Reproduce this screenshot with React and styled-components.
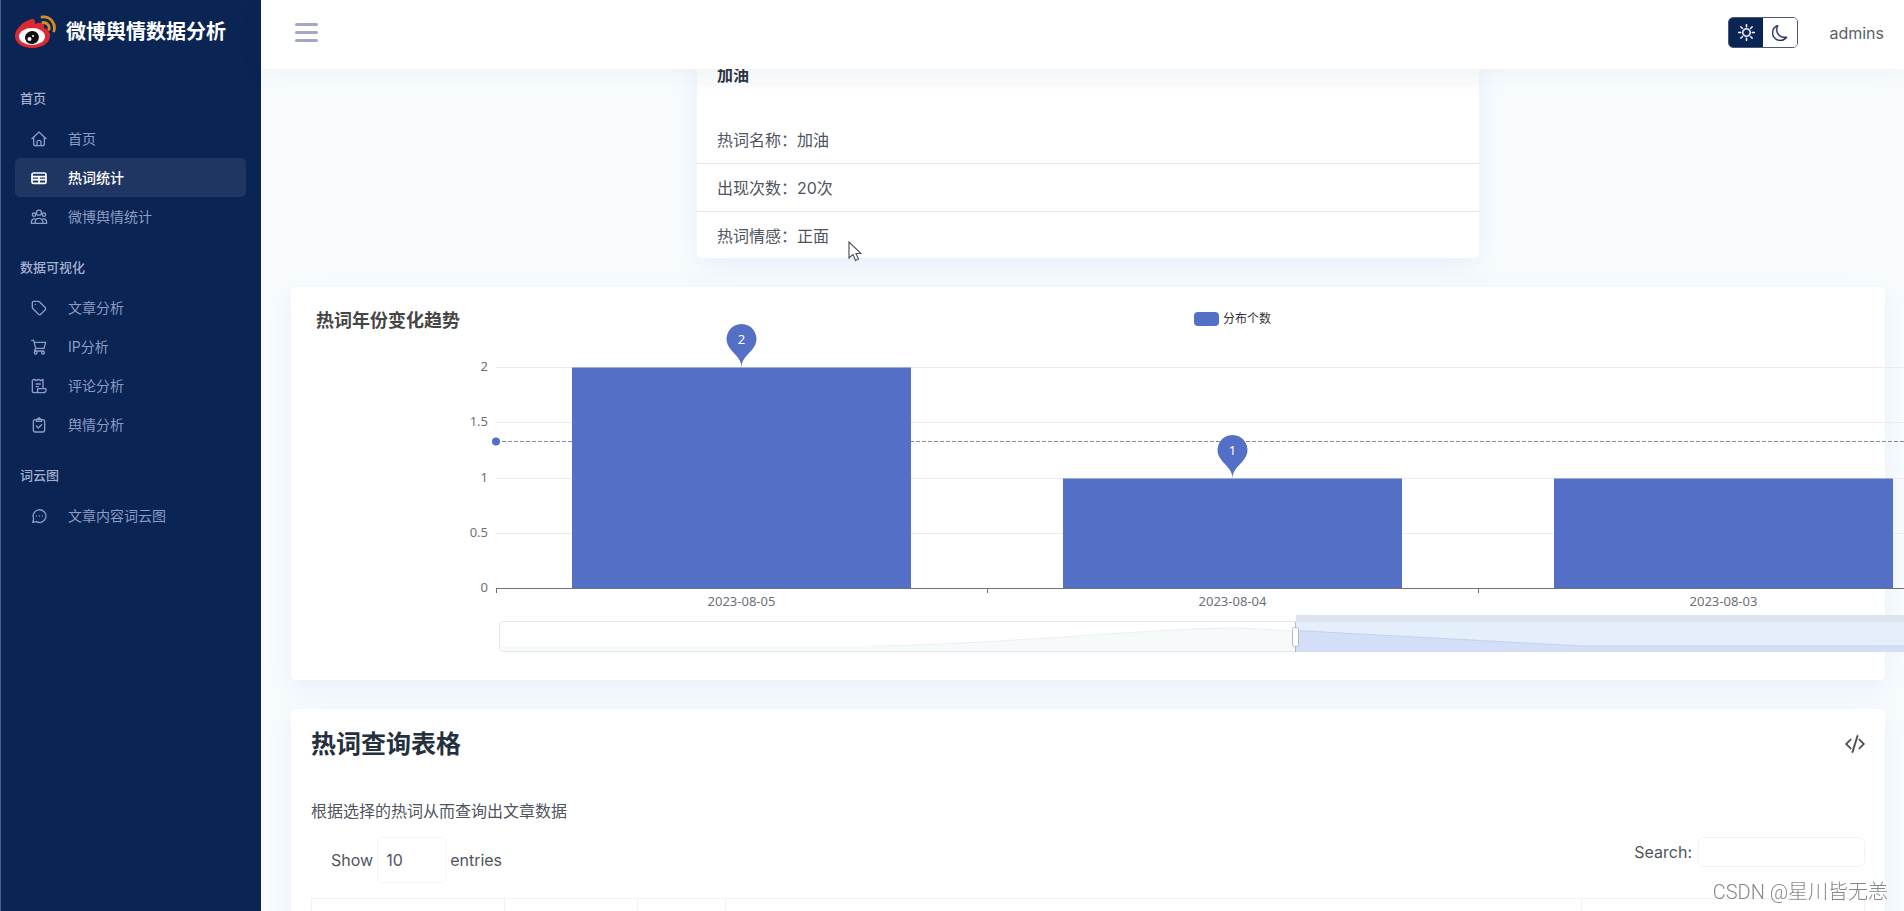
import React from 'react'
import styled, { createGlobalStyle } from 'styled-components'
import { BsSun, BsMoon, BsCodeSlash } from 'react-icons/bs'

const GlobalStyle = createGlobalStyle`
  * {
    box-sizing: border-box;
  }
  body {
    margin: 0;
    overflow: hidden;
    background-color: #f8fcfe;
    color: #4f5560;
    font-family: Inter, "Noto Sans CJK SC", sans-serif;
    font-size: 16px;
    line-height: 24px;
  }
  button, input, select {
    font: inherit;
    color: inherit;
  }
`

const icons = {
  home: (
    <>
      <path d="M1.5 11.5 12 1.5l10.5 10" />
      <path d="M4 9.5V19a3 3 0 0 0 3 3h10a3 3 0 0 0 3-3V9.5" />
      <path d="M9 22v-5a3 3 0 0 1 6 0v5" />
    </>
  ),
  table: (
    <>
      <rect x="1.5" y="4.5" width="21" height="15.5" rx="2.5" />
      <path d="M2 10h20M2 14.5h20M12 10v9.5" />
    </>
  ),
  group: (
    <>
      <circle cx="12" cy="5.5" r="3.8" />
      <circle cx="4.5" cy="8.5" r="2.5" />
      <circle cx="19.5" cy="8.5" r="2.5" />
      <path d="M6 21.5c0-10 12-10 12 0zM6 21.5H0.5c0-5 1.5-7 5.5-6.5M18 21.5h5.5c0-5-1.5-7-5.5-6.5" />
    </>
  ),
  tag: (
    <>
      <path d="M12.6 2.6A2 2 0 0 0 11.2 2H4a2 2 0 0 0-2 2v7.2a2 2 0 0 0 .6 1.4l8.700 8.7a2.4 2.4 0 0 0 3.4 0l6.6-6.6a2.4 2.4 0 0 0 0-3.4z" />
      <path d="M6.5 6.5h.01" />
    </>
  ),
  cart: (
    <>
      <path d="M1 2h3l3 12h13M4.5 5H22l-2.5 9M7 14l-2 4h14" />
      <circle cx="7" cy="20.5" r="2" />
      <circle cx="18" cy="20.5" r="2" />
    </>
  ),
  receipt: (
    <>
      <path d="M18 15V2l-3 2-3.5-2L8 4 5 2 2 3.5V19a3 3 0 0 0 3 3h14a3.5 3.5 0 0 0 3.5-3.5V16H10v3a3 3 0 0 1-3 3" />
      <path d="M8 9h6M8 13h3" />
    </>
  ),
  clipboard: (
    <>
      <rect x="3.5" y="4" width="17" height="18.5" rx="3" />
      <path d="M8 6.5V4l4-3 4 3v2.5z" />
      <path d="m8 13.5 3 3 5-5" />
    </>
  ),
  chat: (
    <>
      <path d="M2.5 21.5 4 16.5a9.8 9.5 0 1 1 4 4z" />
      <path d="M8 12h.01M12.5 12h.01M17 12h.01" />
    </>
  ),
}

const menu = [
  {
    title: '首页',
    items: [
      { icon: 'home', label: '首页' },
      { icon: 'table', label: '热词统计', active: true },
      { icon: 'group', label: '微博舆情统计' },
    ],
  },
  {
    title: '数据可视化',
    items: [
      { icon: 'tag', label: '文章分析' },
      { icon: 'cart', label: 'IP分析' },
      { icon: 'receipt', label: '评论分析' },
      { icon: 'clipboard', label: '舆情分析' },
    ],
  },
  {
    title: '词云图',
    items: [{ icon: 'chat', label: '文章内容词云图' }],
  },
]

const WeiboLogo = () => (
  <LogoSvg viewBox="0 0 42 34" aria-hidden="true">
    <path
      d="M14 5c4-2 7-1 6 4 5-2 10-2 9 4 4 1 6 4 6 8 0 7-8 12-18 12S0 28 0 21C0 14 8 7 14 5z"
      fill="#dc2a32"
    />
    <ellipse cx="17" cy="21.5" rx="13" ry="8.5" fill="#fff" />
    <ellipse cx="17" cy="22.5" rx="7" ry="6.5" fill="#101010" transform="rotate(-15 17 22.5)" />
    <circle cx="14.5" cy="24" r="2" fill="#fff" />
    <circle cx="18" cy="21" r="1" fill="#fff" />
    <g fill="none" stroke="#d98d26" strokeWidth="2.8" strokeLinecap="round">
      <path d="M27 2c8-1 14 6 12 14" />
      <path d="M28 7.5c4 0 7 3 6 7" />
    </g>
  </LogoSvg>
)

const bars = [
  { date: '2023-08-05', value: 2, pin: true },
  { date: '2023-08-04', value: 1, pin: true },
  { date: '2023-08-03', value: 1 },
]
const ticks = [0, 0.5, 1, 1.5, 2]
const left = 185
const step = 491
const y = v => Math.round(282 - v * 110.5) + 0.5

const TrendChart = () => (
  <ChartSvg role="img" aria-label="热词年份变化趋势">
    <ChartTitle x="5" y="21">热词年份变化趋势</ChartTitle>
    <rect x="883" y="6" width="25" height="14" rx="4" fill="#5470c6" />
    <LegendText x="912" y="17">分布个数</LegendText>

    {ticks.map(t => (
      <g key={t}>
        {t > 0 && <path d={`M${left} ${y(t)}H1659`} stroke="#e9ebef" />}
        <AxisText x="177" y={y(t) + 3} textAnchor="end">{t}</AxisText>
      </g>
    ))}

    <path d={`M${left} ${y(4 / 3)}H1659`} stroke="#858b96" strokeDasharray="4 2" />
    <circle cx={left} cy={y(4 / 3)} r="4" fill="#5470c6" />

    {bars.map((b, i) => {
      const cx = left + step * (i + 0.5)
      return (
        <g key={b.date}>
          <rect x={left + 76 + step * i} y={y(b.value)} width="339" height={y(0) - y(b.value)} fill="#5470c6" />
          {b.pin && (
            <g transform={`translate(${cx} ${y(b.value)})`}>
              <path
                d="M-13.55-22.14A15 15 0 1 1 13.55-22.14C9.69-14.01 0-10.5 0 0 0-10.5-9.69-14.01-13.55-22.14Z"
                fill="#5470c6"
              />
              <PinText y="-24" textAnchor="middle">{b.value}</PinText>
            </g>
          )}
          <AxisText x={cx} y="300" textAnchor="middle">{b.date}</AxisText>
        </g>
      )
    })}
    <path d={`M${left} ${y(0)}H1659M${left + 0.5} 282v5M676.5 282v5M1167.5 282v5`} stroke="#6e7079" fill="none" />

    {/* zoom slider */}
    <rect x="188.5" y="315.5" width="1470" height="30" rx="3" fill="#fff" stroke="#e3e8eb" />
    <path d="M189 340H560C700 338 840 322 928 322L985 325V345H189Z" fill="#f6fafb" />
    <path d="M560 340C700 338 840 322 928 322L985 325" fill="none" stroke="#eaf0f2" />
    <rect x="985" y="309" width="674" height="7" fill="#dde4ed" />
    <rect x="985" y="316" width="674" height="30" fill="#e4effb" />
    <path d="M985 324.5 1270 340H1659V346H985Z" fill="#d2dff7" />
    <path d="M985 324.5 1270 340H1659" fill="none" stroke="#c2d1ef" />
    <path d="M984.5 316v30" stroke="#acb8d1" />
    <rect x="981.5" y="321.5" width="6" height="19" rx="2" fill="#fff" stroke="#acb8d1" />
  </ChartSvg>
)

const App = () => {
  return (
    <Page>
      <GlobalStyle />
      <Sidebar>
        <Brand href="#">
          <WeiboLogo />
          微博舆情数据分析
        </Brand>
        {menu.map(group => (
          <nav key={group.title} aria-label={group.title}>
            <GroupTitle>{group.title}</GroupTitle>
            {group.items.map(item => (
              <MenuItem key={item.label} href="#" $active={item.active}>
                <MenuIcon viewBox="0 0 24 24" $active={item.active}>{icons[item.icon]}</MenuIcon>
                {item.label}
              </MenuItem>
            ))}
          </nav>
        ))}
      </Sidebar>

      <Main>
        <Topbar>
          <Hamburger aria-label="菜单">
            <span />
            <span />
            <span />
          </Hamburger>
          <UserArea>
            <ThemeSwitch>
              <ThemeButton $on aria-label="浅色"><BsSun size={17} strokeWidth={0.5} /></ThemeButton>
              <ThemeButton aria-label="深色"><BsMoon size={16} strokeWidth={0.5} /></ThemeButton>
            </ThemeSwitch>
            <UserLink href="#">admins</UserLink>
          </UserArea>
        </Topbar>

        <Scroll>
          <Content>
            <WordCard>
              <WordHeader>加油</WordHeader>
              <WordList>
                <WordRow>热词名称：加油</WordRow>
                <WordRow>出现次数：20次</WordRow>
                <WordRow>热词情感：正面</WordRow>
              </WordList>
            </WordCard>

            <ChartCard>
              <TrendChart />
            </ChartCard>

            <TableCard>
              <TableHead>
                <TableTitle>热词查询表格</TableTitle>
                <CodeButton aria-label="代码"><BsCodeSlash size={20} strokeWidth={0.5} /></CodeButton>
              </TableHead>
              <Desc>根据选择的热词从而查询出文章数据</Desc>
              <Controls>
                <LengthLabel>
                  Show
                  <LengthSelect defaultValue="10">
                    <option>10</option>
                    <option>25</option>
                  </LengthSelect>
                  entries
                </LengthLabel>
                <SearchLabel>
                  Search:
                  <SearchInput type="search" />
                </SearchLabel>
              </Controls>
              <Table>
                <colgroup>
                  <col width="193" />
                  <col width="133" />
                  <col width="88" />
                  <col />
                  <col width="283" />
                </colgroup>
                <thead>
                  <tr>
                    <th /><th /><th /><th /><th />
                  </tr>
                </thead>
              </Table>
            </TableCard>
          </Content>
        </Scroll>
      </Main>

      <Cursor viewBox="0 0 14 21">
        <path d="M1 1v16l4-3.5 2.5 6 3-1.5-2.5-5.500h5z" fill="#fff" stroke="#50545c" strokeWidth="1.2" />
      </Cursor>
      <Watermark>CSDN @星川皆无恙</Watermark>
    </Page>
  )
}

export default App

const Page = styled.div`
  display: flex;
  height: 100vh;
  overflow: hidden;
`
const Sidebar = styled.aside`
  flex: 0 0 261px;
  background-color: #0a2453;
  border-left: 1px solid #4c6088;
`
const Brand = styled.a`
  display: flex;
  align-items: center;
  gap: 9px;
  height: 67px;
  padding: 0 14px 3px;
  color: #fff;
  font-size: 20px;
  font-weight: 700;
  text-decoration: none;
  white-space: nowrap;
`
const LogoSvg = styled.svg`
  width: 42px;
  height: 34px;
`
const GroupTitle = styled.h6`
  margin: 0;
  padding: 21px 19px 11px;
  color: #a3b0d0;
  font-size: 13px;
  font-weight: 500;
  line-height: 20px;
`
const MenuItem = styled.a`
  display: flex;
  align-items: center;
  gap: 21px;
  height: 39px;
  margin: 0 15px 0 14px;
  padding: 0 16px;
  border-radius: 5px;
  color: ${props => (props.$active ? '#fff' : '#8c9cc4')};
  background-color: ${props => (props.$active ? '#203662' : 'transparent')};
  font-size: 14px;
  font-weight: ${props => (props.$active ? 500 : 400)};
  text-decoration: none;
`
const MenuIcon = styled.svg`
  width: 16px;
  height: 16px;
  overflow: visible;
  fill: none;
  stroke: currentColor;
  stroke-width: ${props => (props.$active ? '2.5' : '2')};
  stroke-linecap: round;
  stroke-linejoin: round;
`
const Main = styled.main`
  display: flex;
  flex: 1;
  flex-direction: column;
  min-width: 0;
`
const Topbar = styled.header`
  position: relative;
  z-index: 1;
  display: flex;
  flex: 0 0 69px;
  align-items: center;
  justify-content: space-between;
  padding: 0 20px 4px 34px;
  background-color: #fff;
  box-shadow: 0 4px 24px rgba(60, 90, 140, 0.06);
`
const Hamburger = styled.button`
  display: flex;
  flex-direction: column;
  gap: 5px;
  width: 23px;
  padding: 0;
  border: none;
  background: none;
  span {
    height: 3px;
    border-radius: 2px;
    background-color: #a2a8c4;
  }
`
const UserArea = styled.div`
  display: flex;
  align-items: center;
  gap: 31px;
`
const ThemeSwitch = styled.div`
  display: flex;
  height: 31px;
  border: 1px solid #4d5672;
  border-radius: 5px;
  overflow: hidden;
`
const ThemeButton = styled.button`
  display: flex;
  align-items: center;
  justify-content: center;
  width: 34px;
  padding: 0;
  border: none;
  color: ${props => (props.$on ? '#fff' : '#26345c')};
  background-color: ${props => (props.$on ? '#0a2453' : '#fff')};
  svg {
    stroke: currentColor;
  }
`
const UserLink = styled.a`
  color: #5a5f68;
  text-decoration: none;
`
const Scroll = styled.div`
  flex: 1;
  min-height: 0;
  overflow: hidden;
`
/* already scrolled a little, the first card header sits under the top bar */
const Content = styled.div`
  display: flex;
  flex-direction: column;
  gap: 29px;
  margin-top: -20px;
  padding: 0 19px 0 30px;
`
const Card = styled.section`
  border-radius: 5px;
  background-color: #fff;
  box-shadow: 0 8px 28px rgba(80, 120, 200, 0.1);
`
const WordCard = styled(Card)`
  align-self: center;
  width: calc(50% - 15px);
`
const WordHeader = styled.h6`
  margin: 0;
  padding: 15px 20px 1px;
  background-color: #fafcfc;
  color: #2c343f;
  font-size: 16px;
  font-weight: 700;
  line-height: 22px;
`
const WordList = styled.ul`
  margin: 0;
  padding: 29px 0 0;
  list-style: none;
`
const WordRow = styled.li`
  padding: 12px 20px 11px;
  border-bottom: 1px solid #e6e9ea;
  &:last-child {
    padding-bottom: 10px;
    border-bottom: none;
  }
`
const ChartCard = styled(Card)`
  padding: 19px 20px 21px;
`
const ChartSvg = styled.svg`
  display: block;
  width: 100%;
  height: 353px;
  overflow: visible;
`
const ChartTitle = styled.text`
  fill: #464646;
  font-size: 18px;
  font-weight: 700;
`
const LegendText = styled.text`
  fill: #333;
  font-size: 12px;
`
const AxisText = styled.text`
  fill: #6e7079;
  font-family: "Noto Sans", sans-serif;
  font-size: 13px;
`
const PinText = styled(AxisText)`
  fill: #fff;
`
const TableCard = styled(Card)`
  padding: 19px 20px;
`
const TableHead = styled.div`
  display: flex;
  align-items: center;
  justify-content: space-between;
  height: 32px;
`
const TableTitle = styled.h4`
  margin: 0;
  color: #24303d;
  font-size: 25px;
  font-weight: 700;
`
const CodeButton = styled.button`
  display: flex;
  padding: 0;
  border: none;
  background: none;
  color: #444;
  svg {
    stroke: currentColor;
  }
`
const Desc = styled.p`
  margin: 39px 0 14px;
`
const Controls = styled.div`
  display: flex;
  align-items: flex-start;
  justify-content: space-between;
  height: 61px;
`
const LengthLabel = styled.label`
  display: flex;
  align-items: center;
  gap: 4px;
  padding-left: 20px;
`
const LengthSelect = styled.select`
  width: 69px;
  height: 46px;
  padding: 0 8px;
  border: 1px solid #f3f5f6;
  border-radius: 5px;
  appearance: none;
  background-color: #fff;
`
const SearchLabel = styled.label`
  display: flex;
  align-items: center;
  gap: 6px;
`
const SearchInput = styled.input`
  width: 167px;
  height: 30px;
  border: 1px solid #f1f3f5;
  border-radius: 5px;
  background-color: #fff;
`
const Table = styled.table`
  width: 100%;
  table-layout: fixed;
  border-collapse: collapse;
  th {
    height: 46px;
    border: 1px solid #f1f3f5;
  }
`
const Cursor = styled.svg`
  position: fixed;
  top: 241px;
  left: 848px;
  z-index: 2;
  width: 14px;
  height: 21px;
`
const Watermark = styled.div`
  position: fixed;
  right: 16px;
  bottom: 7px;
  z-index: 2;
  color: #85878c;
  font-family: Roboto, "Noto Sans CJK SC", sans-serif;
  font-size: 20px;
  font-weight: 300;
`
